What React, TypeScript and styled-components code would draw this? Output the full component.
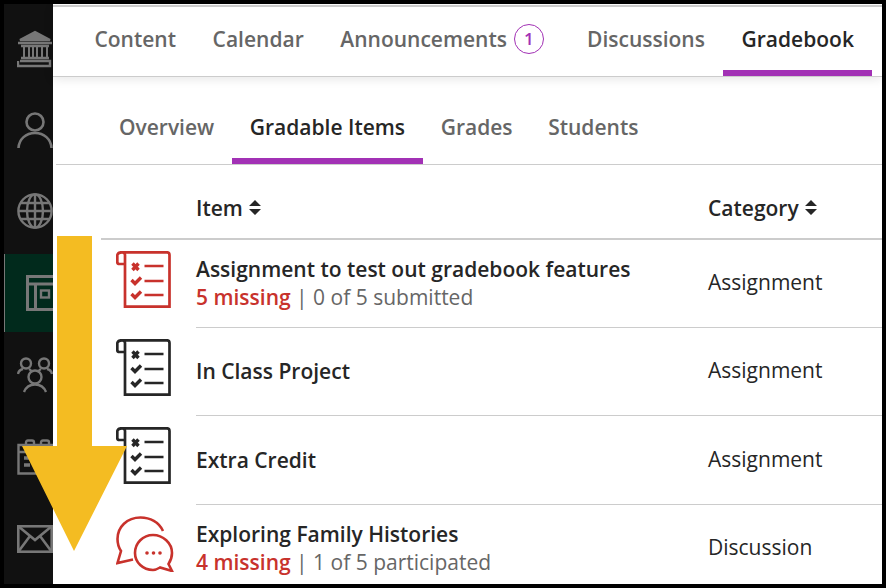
import React from 'react'
import styled, { createGlobalStyle } from 'styled-components'

const GlobalStyle = createGlobalStyle`
  html, body {
    margin: 0;
    padding: 0;
    background: #000;
    font-family: 'Open Sans', 'Noto Sans', sans-serif;
  }
`

const Frame = styled.div`
  position: relative;
  display: flex;
  box-sizing: border-box;
  width: 886px;
  height: 588px;
  border: 4px solid #000;
  overflow: hidden;
  background: #fff;
`

const Sidebar = styled.nav`
  display: flex;
  flex-direction: column;
  flex: 0 0 49px;
  gap: 4px;
  box-sizing: border-box;
  padding-top: 4px;
  background: #111;
  overflow: hidden;
`

const SideItem = styled.div<{ $active?: boolean }>`
  flex: 0 0 78px;
  display: flex;
  align-items: center;
  padding-left: 13px;
  background: ${({ $active }) => ($active ? '#012a1c' : 'transparent')};
  box-shadow: ${({ $active }) => ($active ? 'inset 1px 0 0 #777' : 'none')};
  color: #777;

  svg {
    flex: none;
    display: block;
  }
`

const Main = styled.main`
  flex: 1;
  min-width: 0;
  display: flex;
  flex-direction: column;
  background: #fff;
`

const CourseNav = styled.div`
  position: relative;
  z-index: 1;
  flex: 0 0 71px;
  display: flex;
  box-sizing: border-box;
  margin-top: 1px;
  padding-left: 23.2px;
  border-top: 2px solid #ccc;
  box-shadow: 0 1px 0 #ccc, 0 3px 10px rgba(0, 0, 0, 0.1);
  background: #fff;
`

const SubNav = styled.div`
  flex: 0 0 89px;
  display: flex;
  box-sizing: border-box;
  margin-left: 3px;
  padding-left: 45.2px;
  border-bottom: 1px solid #ccc;
`

const Tab = styled.div<{ $active?: boolean; $sub?: boolean }>`
  display: flex;
  align-items: center;
  gap: 7px;
  box-sizing: border-box;
  padding: ${({ $sub }) => ($sub ? '20px 17.8px 0' : '0 18.3px')};
  font-size: 21px;
  font-weight: 600;
  color: ${({ $active }) => ($active ? '#262626' : '#666')};
  border-bottom: 6px solid ${({ $active }) => ($active ? '#a231b5' : 'transparent')};
  white-space: nowrap;
`

const Badge = styled.span`
  display: flex;
  align-items: center;
  justify-content: center;
  box-sizing: border-box;
  width: 30px;
  height: 30px;
  margin-right: 6.5px;
  border: 1px solid #a231b5;
  border-radius: 50%;
  color: #a231b5;
  font-size: 17px;
  font-weight: 600;
`

const HeaderRow = styled.div`
  flex: 0 0 75px;
  display: grid;
  grid-template-columns: 143px 512px 1fr;
  align-items: center;
  box-sizing: border-box;
  padding-top: 10px;
  background: linear-gradient(#ccc, #ccc) no-repeat 48px 100% / calc(100% - 48px) 2px;
`

const HeaderCell = styled.div<{ $col: number }>`
  grid-column: ${({ $col }) => $col};
  display: flex;
  align-items: center;
  gap: 6px;
  font-size: 21px;
  font-weight: 600;
  color: #262626;
`

const Row = styled.div<{ $height: number }>`
  display: grid;
  grid-template-columns: 143px 512px 1fr;
  flex: 0 0 ${({ $height }) => $height}px;
`

const IconCell = styled.div`
  padding: 11px 0 0 63px;

  svg {
    display: block;
  }
`

const ItemCell = styled.div`
  display: flex;
  flex-direction: column;
  justify-content: center;
  box-sizing: border-box;
  padding-bottom: 1px;
  border-bottom: 1px solid #ccc;
`

const CategoryCell = styled.div`
  display: flex;
  align-items: center;
  box-sizing: border-box;
  padding-bottom: 3px;
  border-bottom: 1px solid #ccc;
  font-size: 21px;
  color: #262626;
`

const ItemTitle = styled.div`
  font-size: 21px;
  font-weight: 600;
  line-height: 28px;
  color: #262626;
`

const ItemSub = styled.div`
  font-size: 21px;
  line-height: 28px;
  color: #666;
`

const Missing = styled.span`
  color: #c8322c;
  font-weight: 600;
`

const Arrow = styled.svg`
  position: absolute;
  left: 18px;
  top: 232px;
`

const BankIcon = () => (
  <svg width="36" height="42" viewBox="0 -4 36 42" fill="none" stroke="currentColor" strokeWidth="2.4">
    <path d="M18 2 L33 10 H3 Z" fill="currentColor" />
    <path d="M1 13 H35 M4 16 H32 M4 28 H32 M3 31 H33 V36 H1 V31" />
    <path d="M7 16 V28 M12 16 V28 M16 16 V28 M20 16 V28 M25 16 V28 M30 16 V28" strokeWidth="2" />
  </svg>
)

const PersonIcon = () => (
  <svg width="36" height="42" viewBox="0 -4 36 42" fill="none" stroke="currentColor" strokeWidth="2.6">
    <circle cx="18" cy="10" r="8.5" />
    <path d="M1.5 36 C2 27 9 21 18 21 C27 21 34 27 34.5 36" />
  </svg>
)

const GlobeIcon = () => (
  <svg width="36" height="36" viewBox="0 0 36 36" fill="none" stroke="currentColor" strokeWidth="2.4">
    <circle cx="18" cy="18" r="16.6" />
    <ellipse cx="18" cy="18" rx="8" ry="16.6" />
    <path d="M18 1.4 V34.6 M1.4 18 H34.6 M4 10 H32 M4 26 H32" />
  </svg>
)

const BookIcon = () => (
  <svg width="36" height="36" viewBox="0 0 36 36" fill="none" stroke="currentColor" strokeWidth="3">
    <path d="M38 1.5 H10.5 V34.5 H38 M10.5 9 H38 M18.5 9 V34.5" />
    <rect x="24" y="15.5" width="8" height="7" strokeWidth="2.4" />
  </svg>
)

const PeopleIcon = () => (
  <svg width="36" height="36" viewBox="0 0 36 36" fill="none" stroke="currentColor" strokeWidth="2.4">
    <circle cx="9" cy="6.5" r="5" />
    <circle cx="27" cy="6.5" r="5" />
    <circle cx="18" cy="20" r="6.5" />
    <path d="M1 17 C1.5 14 4 12.5 6 12 M35 17 C34.5 14 32 12.5 30 12 M12 12 C13 12.5 14 13.5 14.5 14.5 M24 12 C23 12.5 22 13.5 21.5 14.5" />
    <path d="M7 35 C9 30 13 27.5 18 27.5 C23 27.5 27 30 29 35" />
  </svg>
)

const CalendarIcon = () => (
  <svg width="36" height="36" viewBox="0 0 36 36" fill="none" stroke="currentColor" strokeWidth="2.4">
    <path d="M37 6 H1.5 V34.5 H37 M1.5 13 H37" />
    <path d="M9 6 V3.5 Q9 1.5 11 1.5 H15 Q17 1.5 17 3.5 V6 M24 6 V3.5 Q24 1.5 26 1.5 H30 Q32 1.5 32 3.5 V6" />
    <path d="M7 19 H13 M7 26 H13 M18 19 H24 M18 26 H24" strokeWidth="3.4" />
  </svg>
)

const MailIcon = () => (
  <svg width="36" height="28" viewBox="0 0 36 28" fill="none" stroke="currentColor" strokeWidth="2.6">
    <rect x="1.3" y="1.3" width="33.4" height="25.4" />
    <path d="M1.3 1.3 L18 15 L34.7 1.3 M1.3 26.7 L13 11 M34.7 26.7 L23 11" />
  </svg>
)

const ChecklistIcon = ({ color }: { color: string }) => (
  <svg width="56" height="57" viewBox="0 0 56 57" fill="none" stroke={color} strokeWidth="2.7">
    <path d="M4 1.3 H51 Q53.5 1.3 53.5 4 V55.7 H9 V4 Q9 1.3 6 1.3 Q2 1.3 1.3 4 V11 Q1.3 13 3.5 13 H9" />
    <path d="M28.5 15 H47.5 M28.5 30 H47.5 M28.5 44 H47.5" />
    <path d="M16.5 12.5 L22.5 19 M22.5 12.5 L16.5 19" strokeWidth="3.4" />
    <path d="M15.5 29 L19 32.5 L25 26.5 M15.5 43 L19 46.5 L25 40.5" strokeWidth="3.4" />
  </svg>
)

const ChatIcon = ({ color }: { color: string }) => (
  <svg width="58" height="56" viewBox="0 0 58 56" fill="none" stroke={color} strokeWidth="2.6">
    <path d="M47 15 C43 6 34 1.5 24.5 1.5 C11 1.5 1.5 11 1.5 23 C1.5 28 3 32 5 35 L1.5 47 L17 43.5" />
    <path d="M52.5 48 L56 55 L44 51.5 C41.5 53 39.5 54 37 54 C27 54 19 46.5 19 37 C19 27 27 19 37 19 C47 19 56 27 56 37 C56 41 54.5 45 52.5 48 Z" />
    <circle cx="31" cy="37" r="1.8" fill={color} stroke="none" />
    <circle cx="37.5" cy="37" r="1.8" fill={color} stroke="none" />
    <circle cx="44" cy="37" r="1.8" fill={color} stroke="none" />
  </svg>
)

const SortIcon = () => (
  <svg width="12" height="15" viewBox="0 0 12 15" fill="#262626">
    <path d="M6 0 L12 6 H0 Z M0 9 H12 L6 15 Z" />
  </svg>
)

const RED = '#c8322c'
const DARK = '#262626'

const items = [
  { title: 'Assignment to test out gradebook features', missing: '5 missing', rest: '0 of 5 submitted', category: 'Assignment', height: 88, icon: <ChecklistIcon color={RED} /> },
  { title: 'In Class Project', category: 'Assignment', height: 88, icon: <ChecklistIcon color={DARK} /> },
  { title: 'Extra Credit', category: 'Assignment', height: 89, icon: <ChecklistIcon color={DARK} /> },
  { title: 'Exploring Family Histories', missing: '4 missing', rest: '1 of 5 participated', category: 'Discussion', height: 88, icon: <ChatIcon color={RED} /> },
]

export default function App() {
  return (
    <Frame>
      <GlobalStyle />
      <Sidebar>
        <SideItem><BankIcon /></SideItem>
        <SideItem><PersonIcon /></SideItem>
        <SideItem><GlobeIcon /></SideItem>
        <SideItem $active><BookIcon /></SideItem>
        <SideItem><PeopleIcon /></SideItem>
        <SideItem><CalendarIcon /></SideItem>
        <SideItem><MailIcon /></SideItem>
      </Sidebar>
      <Main>
        <CourseNav>
          <Tab>Content</Tab>
          <Tab>Calendar</Tab>
          <Tab>
            Announcements <Badge>1</Badge>
          </Tab>
          <Tab>Discussions</Tab>
          <Tab $active>Gradebook</Tab>
        </CourseNav>
        <SubNav>
          <Tab $sub>Overview</Tab>
          <Tab $sub $active>Gradable Items</Tab>
          <Tab $sub>Grades</Tab>
          <Tab $sub>Students</Tab>
        </SubNav>
        <HeaderRow>
          <HeaderCell $col={2}>
            Item <SortIcon />
          </HeaderCell>
          <HeaderCell $col={3}>
            Category <SortIcon />
          </HeaderCell>
        </HeaderRow>
        {items.map((item) => (
          <Row key={item.title} $height={item.height}>
            <IconCell>{item.icon}</IconCell>
            <ItemCell>
              <ItemTitle>{item.title}</ItemTitle>
              {item.missing && (
                <ItemSub>
                  <Missing>{item.missing}</Missing> | {item.rest}
                </ItemSub>
              )}
            </ItemCell>
            <CategoryCell>{item.category}</CategoryCell>
          </Row>
        ))}
      </Main>
      <Arrow width="106" height="316" viewBox="0 0 106 316" fill="#f4bc22">
        <path d="M35 0 H70 V210 H105 L52 315 L0 210 H35 Z" />
      </Arrow>
    </Frame>
  )
}
